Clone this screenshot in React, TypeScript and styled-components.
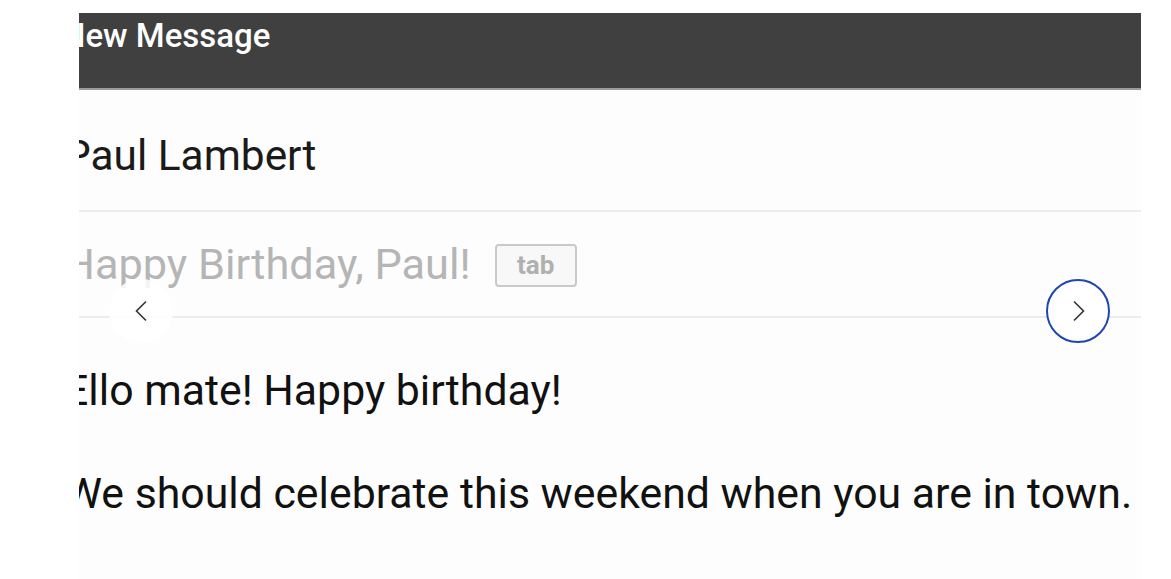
import styled, { createGlobalStyle } from 'styled-components'

const GlobalStyle = createGlobalStyle`
    html, body {
        margin: 0;
        padding: 0;
        background: #ffffff;
        font-family: Roboto, 'Liberation Sans', sans-serif;
    }
`

const Stage = styled.div`
    position: relative;
    width: 1171px;
    height: 579px;
    overflow: hidden;
    padding: 13px 30px 0 79px;
    box-sizing: border-box;
`

const Viewport = styled.div`
    width: 1062px;
    height: 566px;
    overflow: hidden;
    background: #fdfdfd;
`

const Slide = styled.div`
    margin-left: -15px;
    width: 1077px;
    display: flex;
    flex-direction: column;
`

const Header = styled.div`
    height: 77px;
    box-sizing: border-box;
    padding-top: 4px;
    background: #404040;
    border-bottom: 2px solid #9c9c9c;
    color: #ffffff;
    font-size: 33px;
    font-weight: 500;
    line-height: 37px;
    text-indent: -2px;
`

const Row = styled.div<{ top: number; bottom: number }>`
    display: flex;
    align-items: center;
    gap: 24px;
    padding: ${p => p.top}px 0 ${p => p.bottom}px 0;
    border-bottom: 2px solid #ededed;
    font-size: 42.7px;
    line-height: 50px;
`

const Recipient = styled.span`
    color: #1a1a1a;
    font-size: 42.4px;
`

const Subject = styled.span`
    color: #b5b5b5;
    font-size: 43.3px;
`

const Badge = styled.span`
    display: inline-flex;
    align-items: center;
    justify-content: center;
    width: 82px;
    height: 43px;
    box-sizing: border-box;
    border: 2px solid #c9c9c9;
    border-radius: 4px;
    background: #f8f8f8;
    color: #b0b0b0;
    font-size: 26px;
    font-weight: 700;
    line-height: 1;
`

const Body = styled.div`
    padding-top: 47px;
    display: flex;
    flex-direction: column;
    gap: 53px;
    color: #111111;
    font-size: 42.8px;
    line-height: 50px;
    white-space: nowrap;
`

const NavButton = styled.button<{ side: 'left' | 'right' }>`
    position: absolute;
    top: 279px;
    left: ${p => (p.side === 'left' ? '109px' : '1046px')};
    width: 64px;
    height: 64px;
    box-sizing: border-box;
    border-radius: 50%;
    padding: 0;
    display: flex;
    align-items: center;
    justify-content: center;
    background: ${p => (p.side === 'left' ? 'rgba(255, 255, 255, 0.85)' : '#ffffff')};
    border: ${p => (p.side === 'left' ? 'none' : '2px solid #1d45b3')};
    color: #333333;
    cursor: pointer;
`

function Chevron({ dir }: { dir: 'left' | 'right' }) {
    return (
        <svg width="14" height="22" viewBox="0 0 14 22" fill="none">
            <path
                d={dir === 'left' ? 'M12 1.5 L2.5 11 L12 20.5' : 'M3 1.5 L12.5 11 L3 20.5'}
                stroke="currentColor"
                strokeWidth="1.6"
            />
        </svg>
    )
}

export default function App() {
    return (
        <>
            <GlobalStyle />
            <Stage>
                <Viewport>
                    <Slide>
                        <Header>New Message</Header>
                        <Row top={41} bottom={29}>
                            <Recipient>Paul Lambert</Recipient>
                        </Row>
                        <Row top={28} bottom={26}>
                            <Subject>Happy Birthday, Paul!</Subject>
                            <Badge>tab</Badge>
                        </Row>
                        <Body>
                            <span>Ello mate! Happy birthday!</span>
                            <span>We should celebrate this weekend when you are in town.</span>
                        </Body>
                    </Slide>
                </Viewport>
                <NavButton side="left" aria-label="Previous">
                    <Chevron dir="left" />
                </NavButton>
                <NavButton side="right" aria-label="Next">
                    <Chevron dir="right" />
                </NavButton>
            </Stage>
        </>
    )
}
